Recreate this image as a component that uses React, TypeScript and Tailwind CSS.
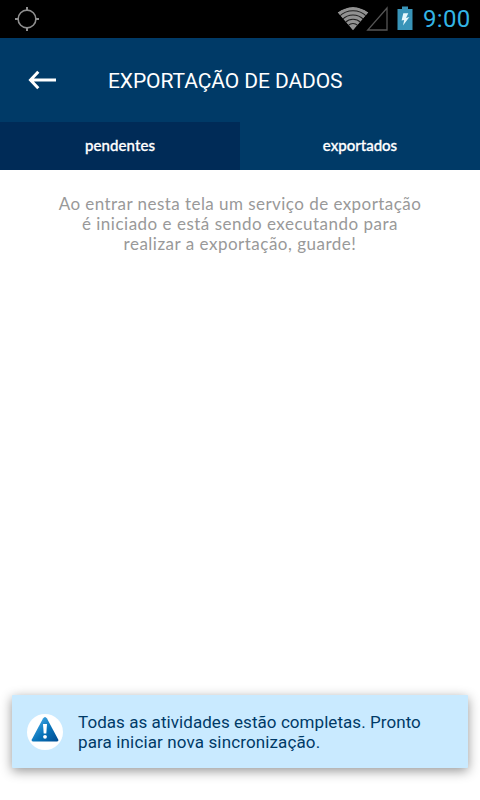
import React from "react";

function StatusBar() {
  return (
    <div className="flex h-[38px] items-center bg-black pl-[14px] pr-[9px]">
      <svg width="26" height="26" viewBox="0 0 26 26" fill="none" stroke="#8f8f8f" strokeWidth="2">
        <circle cx="13" cy="13" r="8.900" strokeWidth="1.600" />
        <path d="M13 1v4M13 21v4M1 13h4M21 13h4" />
      </svg>
      <svg className="ml-auto" width="90" height="38" viewBox="330 0 90 38" fill="none">
        <clipPath id="wifi">
          <path d="M353 30.500L337.500 12.500Q353 1.500 368.500 12.500Z" />
        </clipPath>
        <g clipPath="url(#wifi)">
          <path d="M353 30.500L337.500 12.500Q353 1.500 368.500 12.500Z" fill="#929292" />
          <circle cx="353" cy="30" r="6.500" stroke="#202020" strokeWidth="1.100" />
          <circle cx="353" cy="30" r="10.700" stroke="#202020" strokeWidth="1.100" />
          <circle cx="353" cy="30" r="15" stroke="#202020" strokeWidth="1.100" />
          <circle cx="353" cy="30" r="19.200" stroke="#202020" strokeWidth="1.100" />
        </g>
        <path d="M387 8V30H367.700Z" stroke="#555555" strokeWidth="1.300" />
        <path d="M402 6.500h6V9h4.500v21h-15V9h4.500z" fill="#3994b8" />
        <path d="M403.300 13.200h5l-2.300 4.700 3.400-.8-6.400 8.400 1.200-5.600-2.600.6z" fill="#e8f8fc" />
      </svg>
      <span className="ml-[3px] w-[48px] whitespace-nowrap font-['Roboto',sans-serif] text-[24px] leading-[38px] tracking-[0.300px] text-[#33b5e5]">
        9:00
      </span>
    </div>
  );
}

function Header() {
  return (
    <header className="flex h-[84px] items-center bg-[#003a67] pl-[28px]">
      <svg width="28" height="20" viewBox="0 0 28 20" fill="none" stroke="white" strokeWidth="3">
        <path d="M10.300 1.800L2.500 10l7.800 8.200M2.500 10H28" />
      </svg>
      <h1 className="ml-[52px] whitespace-nowrap pt-[3px] font-['Roboto',sans-serif] text-[21px] tracking-[-0.080px] text-white">
        EXPORTAÇÃO DE DADOS
      </h1>
    </header>
  );
}

function Tabs() {
  return (
    <nav className="grid h-[48px] grid-cols-2 font-['Lato',sans-serif] text-[15px] font-medium leading-[46px] text-white">
      <button className="bg-[#002b57] pb-[2px] tracking-[0.100px] [-webkit-text-stroke:0.300px_white]">pendentes</button>
      <button className="bg-[#003a67] pb-[2px] tracking-[0px] [-webkit-text-stroke:0.300px_white]">exportados</button>
    </nav>
  );
}

function Notice() {
  return (
    <aside className="mx-[12px] mb-[32px] mt-auto flex h-[73px] items-center rounded-[1px] bg-[#c9eaff] pl-[15px] shadow-[0_3px_12px_rgba(0,0,0,0.42)]">
      <svg width="36" height="36" viewBox="0 0 36 36">
        <defs>
          <linearGradient id="warn" x1="0" y1="0" x2="1" y2="1">
            <stop offset="0.200" stopColor="#3aa0de" />
            <stop offset="0.550" stopColor="#0874ba" />
            <stop offset="1" stopColor="#004b91" />
          </linearGradient>
        </defs>
        <circle cx="18" cy="18" r="18" fill="white" />
        <path d="M18 3Q19 3 20 4.600L31.200 25.600Q32 27.500 30 27.500H6Q4 27.500 4.800 25.600L16 4.600Q17 3 18 3Z" fill="url(#warn)" />
        <path d="M16 10h4l-.7 9.500h-2.600z" fill="white" />
        <circle cx="18" cy="22.800" r="1.900" fill="white" />
      </svg>
      <p className="ml-[15px] whitespace-nowrap font-['Roboto',sans-serif] text-[17px] leading-[20px] text-[#003a67]">
        <span className="block tracking-[0.060px]">Todas as atividades estão completas. Pronto</span>
        <span className="block tracking-[0.130px]">para iniciar nova sincronização.</span>
      </p>
    </aside>
  );
}

export default function App() {
  return (
    <div className="flex h-[800px] w-[480px] flex-col overflow-hidden bg-white">
      <StatusBar />
      <Header />
      <Tabs />
      <main className="pt-[24px] text-center font-['Lato',sans-serif] text-[17px] leading-[20px] text-[#999999]">
        <span className="block tracking-[0.450px]">Ao entrar nesta tela um serviço de exportação</span>
        <span className="block tracking-[0.500px]">é iniciado e está sendo executando para</span>
        <span className="block tracking-[0.500px]">realizar a exportação, guarde!</span>
      </main>
      <Notice />
    </div>
  );
}
